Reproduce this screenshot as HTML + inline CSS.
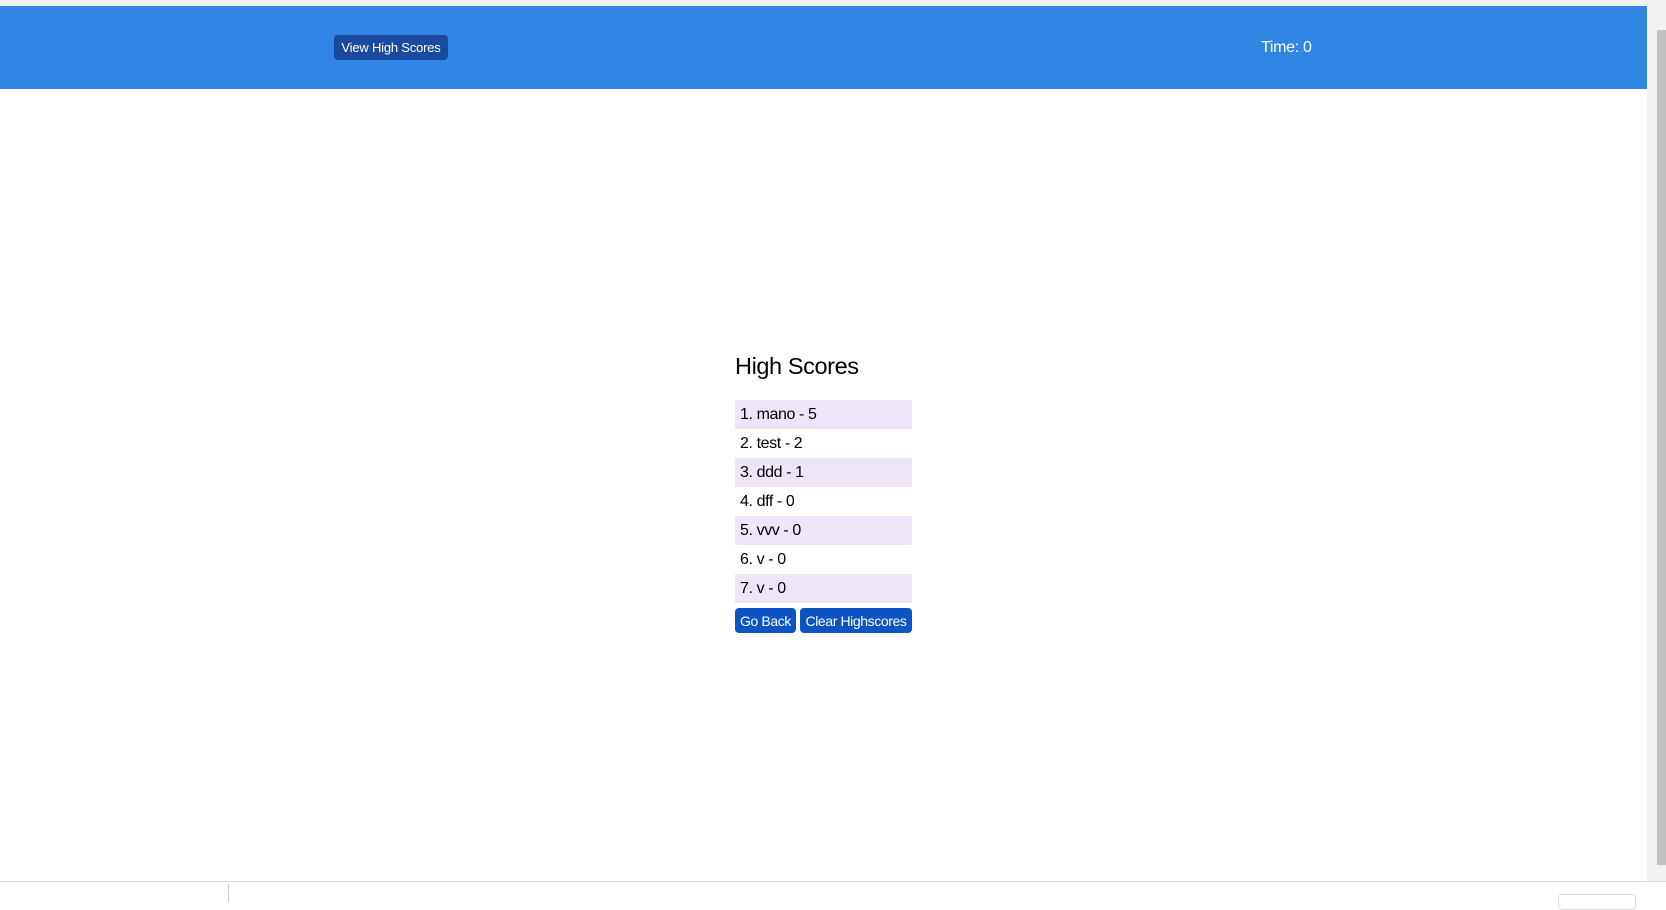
<!DOCTYPE html>
<html><head><style>
body{margin:0;width:1666px;height:901px;overflow:hidden;background:#fff;font-family:"Liberation Sans",Arial,sans-serif;position:relative}
.top{position:absolute;left:0;top:0;width:1666px;height:6px;background:#f1f1f1}
.hdr{position:absolute;left:0;top:6px;width:1647px;height:83px;background:#3286e3}
.vhs{position:absolute;left:334px;top:35px;width:114px;height:25px;background:#1a4a9e;border-radius:4px;color:#fff;font-size:13px;line-height:25px;text-align:center;letter-spacing:-0.2px}
.time{position:absolute;left:1261px;top:39px;color:#fff;font-size:16px;letter-spacing:-0.3px}
.sb{position:absolute;left:1647px;top:6px;width:19px;height:876px;background:#f1f1f1}
.thumb{position:absolute;left:1657px;top:30px;width:9px;height:835px;background:#c1c1c1}
.bot{position:absolute;left:0;top:881px;width:1666px;height:20px;background:#fff;border-top:1px solid #ddd}
h2{position:absolute;left:735px;top:353px;margin:0;font-size:23.5px;font-weight:normal;color:#000;letter-spacing:-0.4px}
.row{position:absolute;left:735px;width:172px;height:29px;padding-left:5px;font-size:16px;line-height:30px;color:#000;letter-spacing:-0.4px}
.alt{background:#efe5f8}
.btn{position:absolute;top:608px;height:25px;background:#0c53c4;color:#fff;border-radius:4px;font-size:14px;line-height:26px;text-align:center;letter-spacing:-0.4px}
</style></head><body>
<div class="top"></div>
<div class="hdr"></div>
<div class="vhs">View High Scores</div>
<div class="time">Time: 0</div>
<div class="sb"></div><div class="thumb"></div>
<h2>High Scores</h2>
<div class="row alt" style="top:400px">1. mano - 5</div>
<div class="row" style="top:429px">2. test - 2</div>
<div class="row alt" style="top:458px">3. ddd - 1</div>
<div class="row" style="top:487px">4. dff - 0</div>
<div class="row alt" style="top:516px">5. vvv - 0</div>
<div class="row" style="top:545px">6. v - 0</div>
<div class="row alt" style="top:574px">7. v - 0</div>
<div class="btn" style="left:735px;width:61px">Go Back</div>
<div class="btn" style="left:800px;width:112px">Clear Highscores</div>
<div class="bot"><div style="position:absolute;left:228px;top:2px;width:1px;height:18px;background:#ccc"></div><div style="position:absolute;left:1558px;top:12px;width:76px;height:14px;border:1px solid #ddd;border-radius:4px"></div></div>
</body></html>
